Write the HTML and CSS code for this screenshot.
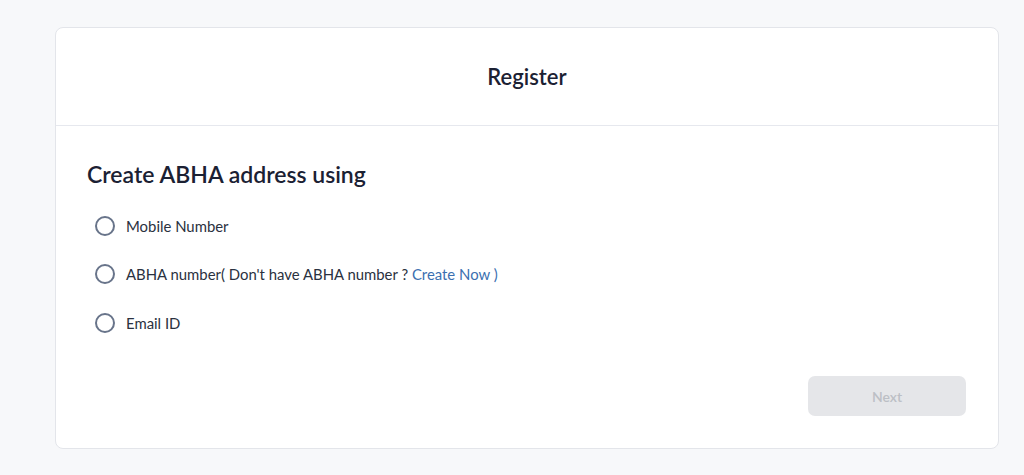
FILE: index.html
```html
<!DOCTYPE html>
<html lang="en">
<head>
<meta charset="utf-8">
<title>Register</title>
<link rel="stylesheet" href="styles.css">
</head>
<body>
<main class="page">
  <section class="card">
    <header class="card-header">
      <h1 class="title">Register</h1>
    </header>
    <div class="card-body">
      <h2 class="subtitle">Create ABHA address using</h2>
      <ul class="options">
        <li class="option"><span class="radio"></span><span class="label">Mobile Number</span></li>
        <li class="option"><span class="radio"></span><span class="label">ABHA number( Don't have ABHA number ? <a class="link" href="#">Create Now )</a></span></li>
        <li class="option"><span class="radio"></span><span class="label">Email ID</span></li>
      </ul>
      <div class="actions">
        <button class="btn-next" disabled>Next</button>
      </div>
    </div>
  </section>
</main>
</body>
</html>
```
FILE: styles.css
```css
* { box-sizing: border-box; }
html, body {
  margin: 0;
  padding: 0;
  background: #f7f8fa;
  font-family: "Lato", "Open Sans", sans-serif;
  color: #1d2333;
}
.page {
  padding: 27px 26px 0 55px;
}
.card {
  background: #ffffff;
  border: 1px solid #e3e5ea;
  border-radius: 8px;
  width: 944px;
  height: 422px;
}
.card-header {
  height: 98px;
  border-bottom: 1px solid #e6e8ee;
  display: flex;
  align-items: center;
  justify-content: center;
}
.title {
  margin: 0;
  font-size: 22px;
  font-weight: 600;
  color: #1b2133;
}
.card-body {
  padding: 33px 32px 0 31px;
}
.subtitle {
  margin: 0;
  font-size: 23px;
  font-weight: 600;
  color: #1b2133;
  line-height: 30px;
}
.options {
  list-style: none;
  margin: 26px 0 0 0;
  padding: 0 0 0 8px;
  display: flex;
  flex-direction: column;
  gap: 27.5px;
}
.option {
  display: flex;
  align-items: center;
  gap: 11px;
  height: 21px;
}
.radio {
  width: 20px;
  height: 20px;
  border: 2px solid #68748a;
  border-radius: 50%;
  flex: none;
}
.label {
  font-size: 14.9px;
  color: #2a3140;
}
.link {
  color: #3b70b0;
  text-decoration: none;
}
.actions {
  display: flex;
  justify-content: flex-end;
  margin-top: 43px;
}
.btn-next {
  width: 158px;
  height: 40px;
  border: none;
  border-radius: 7px;
  background: #e5e6e9;
  color: #bcbfc5;
  font-family: inherit;
  font-size: 14px;
  font-weight: 600;
}
```
